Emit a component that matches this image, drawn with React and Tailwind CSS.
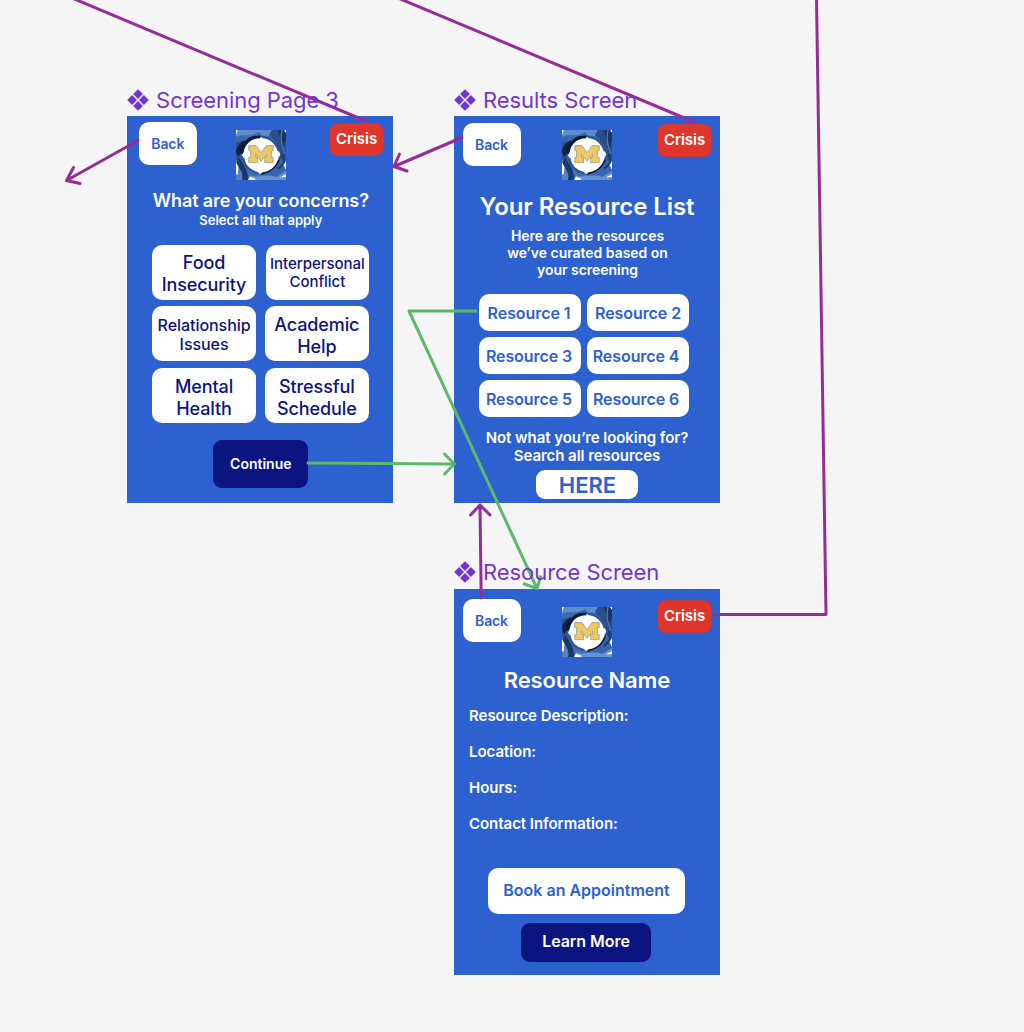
import React from "react";
import clsx from "clsx";

const PURPLE = "#962d96";
const GREEN = "#5bb96c";

function Logo({ className }) {
  return (
    <svg viewBox="0 0 50 50" className={clsx("absolute h-[50px] w-[50px]", className)} aria-label="M logo">
      <rect width="50" height="50" fill="#3766ae" />
      <path d="M0 0H36L33 6L18 5L8 9L0 9Z" fill="#5d8ccd" />
      <path d="M0 7C7 3 13 8 23 2L27 7C16 6 12 10 8 14L0 14Z" fill="#3b69b0" />
      <path d="M36 0H50V32L44 28L43 20L38 10L33 5Z" fill="#2a4f88" />
      <path d="M42 0L50 0V10L47 18L44 8Z" fill="#1b355f" />
      <path d="M46 0C44 10 46 16 49 24" stroke="#4d78b5" strokeWidth="1.3" fill="none" />
      <path d="M0 12L8 11L5 22L6 34L0 30Z" fill="#2a5292" />
      <path d="M0 22C0 18 3 13 9 10L6 22L2 27Z" fill="#0f2146" />
      <path d="M0 30C6 31 10 39 10 50H0Z" fill="#5681c0" />
      <path d="M3 28C8 35 12 39 12 50H6C8 43 3 38 0 33Z" fill="#1b3767" />
      <path d="M8 33C14 42 20 45 30 44L38 50H14Z" fill="#4170b9" />
      <path d="M14 45C20 49 30 43 40 47L50 41V50H13Z" fill="#6692d0" />
      <path d="M42 39L48 33L47 24" stroke="#1d3a6a" strokeWidth="2" fill="none" />
      <circle cx="25" cy="25" r="17.8" fill="#fff" />
      <path d="M4 22C6 13 11 8 17 6L25 5.5L24 8.3C17 8.5 12 11.5 9 17L6.5 25Z" fill="#0c1a38" />
      <path d="M44 28C43 36 36 42 25 45L25.5 42.6C34 41.5 39 37 41.5 31Z" fill="#0c1a38" />
      <path d="M26 7C34 7.5 40.5 13 42.6 21" stroke="#2d5695" strokeWidth="2.2" fill="none" />
      <path d="M7.2 28C8.5 36 14 41.5 22 43.2" stroke="#2d5695" strokeWidth="2.2" fill="none" />
      <path d="M42.8 21L44.3 24.5L43 27L41.5 24ZM5.8 25.5L7.8 22L8.2 28ZM24.5 44L22 42.4L27 42.2Z" fill="#fff" />
      <path d="M0 0L2 0L0 5ZM48 0H50V3ZM0 32L2.5 37L1.5 45L0 44ZM14 46.5L20 49L18 50H12ZM50 31L47.5 35L50 40ZM44 47.5L50 44V47Z" fill="#fff" />
      <path
        d="M12.8 15.6H20L25.1 22.4L30.2 15.6H37.2V20.6H35.4V27.5H37.2V32.7H28.7V27.5H30.6V24.4L25.1 31.4L19.6 24.4V27.5H21.5V32.7H12.8V27.5H14.6V20.6H12.8Z"
        fill="#efc765"
        stroke="#8f9087"
        strokeWidth="0.7"
      />
    </svg>
  );
}

function Button({ className, children }) {
  return (
    <button type="button" className={clsx("flex items-center justify-center whitespace-nowrap", className)}>
      {children}
    </button>
  );
}

function Header({ className, backClass, logoClass, crisisClass }) {
  return (
    <header className={clsx("relative flex shrink-0 items-start justify-between", className)}>
      <Button className={clsx("h-[43px] w-[58px] rounded-[10px] bg-white pr-px text-[14px] tracking-[-0.1px] text-[#2d61d0]", backClass)}>
        Back
      </Button>
      <Logo className={logoClass} />
      <Button className={clsx("h-[33px] w-[55px] rounded-[9px] border border-[#c23a3f] bg-[#df352a] text-[15px] tracking-[-0.05px] text-white", crisisClass)}>
        Crisis
      </Button>
    </header>
  );
}

function Label({ className, children }) {
  return (
    <div className={clsx("absolute flex h-[26px] items-center gap-[6.8px] whitespace-nowrap text-[22px] leading-[26px] tracking-[-0.06px] text-[#7335d0]", className)}>
      <svg viewBox="-11 -11 22 22" className="h-[22px] w-[22px]" fill="currentColor">
        <path d="M0 -10.8L4.9 -5.9L0 -1L-4.9 -5.9ZM0 1L4.9 5.9L0 10.8L-4.9 5.9ZM-5.9 -4.9L-1 0L-5.9 4.9L-10.8 0ZM5.9 -4.9L10.8 0L5.9 4.9L1 0Z" />
      </svg>
      {children}
    </div>
  );
}

const concerns = [
  { lines: ["Food", "Insecurity"], style: "pt-[3px] text-[18px] leading-[22px] tracking-[-0.12px]" },
  { lines: ["Interpersonal", "Conflict"], style: "ml-px pt-[2px] text-[15px] leading-[18px] tracking-[-0.05px]" },
  { lines: ["Relationship", "Issues"], style: "pt-[2px] text-[16px] leading-[19px] tracking-[-0.05px]" },
  { lines: ["Academic", "Help"], style: "pt-[4px] text-[18px] leading-[22px] tracking-[-0.12px]" },
  { lines: ["Mental", "Health"], style: "pt-[4px] text-[18px] leading-[22px] tracking-[-0.12px]" },
  { lines: ["Stressful", "Schedule"], style: "pt-[4px] text-[18px] leading-[22px] tracking-[-0.12px]" },
];

function ScreeningScreen() {
  return (
    <section className="absolute left-[127.3px] top-[116.3px] flex h-[386.4px] w-[266px] flex-col bg-[#2d61d0] text-center font-semibold text-white">
      <Header className="h-[73.7px]" backClass="ml-[12px] mt-[6px]" logoClass="left-[108.7px] top-[13.7px]" crisisClass="mr-[9.3px] mt-[6.4px]" />
      <h2 className="pl-px text-[18px] leading-[22px] tracking-[-0.1px]">What are your concerns?</h2>
      <p className="-mt-px pl-px text-[13px] leading-[18px]">Select all that apply</p>
      <div className="mt-[15.7px] grid grid-cols-[103.5px_103.5px] gap-x-[9.3px] gap-y-[6.8px] pl-[25px] text-[#0c147f]">
        {concerns.map(({ lines, style }) => (
          <Button key={lines[0]} className={clsx("h-[55px] rounded-[10px] bg-white font-medium", style)}>
            <span>
              {lines[0]}
              <br />
              {lines[1]}
            </span>
          </Button>
        ))}
      </div>
      <Button className="mx-auto mt-[17px] h-[48px] w-[94.5px] rounded-[9px] bg-[#0c147f] pb-[2px] pl-px text-[14px]">Continue</Button>
    </section>
  );
}

function ResultsScreen() {
  return (
    <section className="absolute left-[454px] top-[116.3px] flex h-[386.4px] w-[266px] flex-col bg-[#2d61d0] text-center font-semibold text-white">
      <Header className="h-[75.7px]" backClass="ml-[9px] mt-[7px]" logoClass="left-[108.3px] top-[13.7px]" crisisClass="mr-[8px] mt-[7.4px]" />
      <h2 className="text-[24px] leading-[30px] tracking-[-0.08px]">Your Resource List</h2>
      <p className="mt-[5.4px] pl-px text-[14px] leading-[17px] tracking-[-0.03px]">
        Here are the resources
        <br />
        we’ve curated based on
        <br />
        your screening
      </p>
      <div className="mt-[16px] grid grid-cols-[101.6px_101.6px] gap-x-[6.7px] gap-y-[5.9px] pl-[25px] text-[#2d61d0]">
        {[1, 2, 3, 4, 5, 6].map((n) => (
          <Button key={n} className={clsx("h-[37px] rounded-[10px] bg-white text-[16px] tracking-[-0.08px]", n % 2 === 1 && "pr-[1.6px]", (n === 4 || n === 6) && "pr-[4px]")}>
            Resource {n}
          </Button>
        ))}
      </div>
      <p className="mt-[11.8px] text-[15px] leading-[18px] tracking-[-0.05px]">
        Not what you’re looking for?
        <br />
        Search all resources
      </p>
      <Button className="mx-auto mt-[5px] h-[29px] w-[102.6px] rounded-[9px] bg-white pl-px pt-[2px] text-[22px] text-[#2d61d0]">HERE</Button>
    </section>
  );
}

function ResourceScreen() {
  return (
    <section className="absolute left-[454px] top-[588.5px] flex h-[386.4px] w-[266px] flex-col bg-[#2d61d0] font-semibold text-white">
      <Header className="h-[78.2px]" backClass="ml-[9px] mt-[10.6px]" logoClass="left-[108.3px] top-[18.5px]" crisisClass="mr-[8px] mt-[11.2px]" />
      <h2 className="text-center text-[22px] leading-[26px] tracking-[-0.1px]">Resource Name</h2>
      <div className="mt-[14px] flex flex-col gap-[18px] pl-[15px] text-[15px] leading-[18px] tracking-[-0.04px]">
        <p>Resource Description:</p>
        <p>Location:</p>
        <p>Hours:</p>
        <p>Contact Information:</p>
      </div>
      <Button className="ml-[34px] mt-[35.7px] h-[46px] w-[197px] rounded-[10px] bg-white pb-[2px] text-[16px] text-[#2d61d0]">Book an Appointment</Button>
      <Button className="ml-[67px] mt-[9px] h-[39px] w-[130px] rounded-[9px] bg-[#0c147f] pb-[3px] text-[16px] tracking-[-0.05px]">Learn More</Button>
    </section>
  );
}

function Connectors() {
  return (
    <svg viewBox="0 0 1024 1032" className="absolute inset-0 h-[1032px] w-[1024px]" fill="none" strokeWidth="3" strokeLinecap="round" strokeLinejoin="round">
      <g stroke={PURPLE}>
        <path d="M72 -2L367 121.5" />
        <path d="M398 -2L694 122" />
        <path d="M138 140.5L66.5 180.5M73.5 167.5L66.5 180.5L80 183.5" />
        <path d="M462 137.5L394 166.5M399.5 154L394 166.5L407 171" />
        <path d="M816.5 -2L826 614.5H713.5" strokeLinecap="butt" />
        <path d="M481.2 598L480 505M470.5 515L480 505L490 515" />
      </g>
      <g stroke={GREEN}>
        <path d="M308 463L454.5 464M444.5 454L454.5 464L444.5 474" />
        <path d="M477 311H409L537 588.5M523 583.5L537 588.5L541 575.5" strokeLinecap="butt" />
      </g>
    </svg>
  );
}

export default function App() {
  return (
    <main className="relative h-[1032px] w-[1024px] overflow-hidden bg-[#f5f5f5] font-['Inter',sans-serif]">
      <ScreeningScreen />
      <ResultsScreen />
      <ResourceScreen />
      <Connectors />
      <Label className="left-[127.3px] top-[87px]">Screening Page 3</Label>
      <Label className="left-[454.2px] top-[87px]">Results Screen</Label>
      <Label className="left-[454.2px] top-[559px]">Resource Screen</Label>
    </main>
  );
}
